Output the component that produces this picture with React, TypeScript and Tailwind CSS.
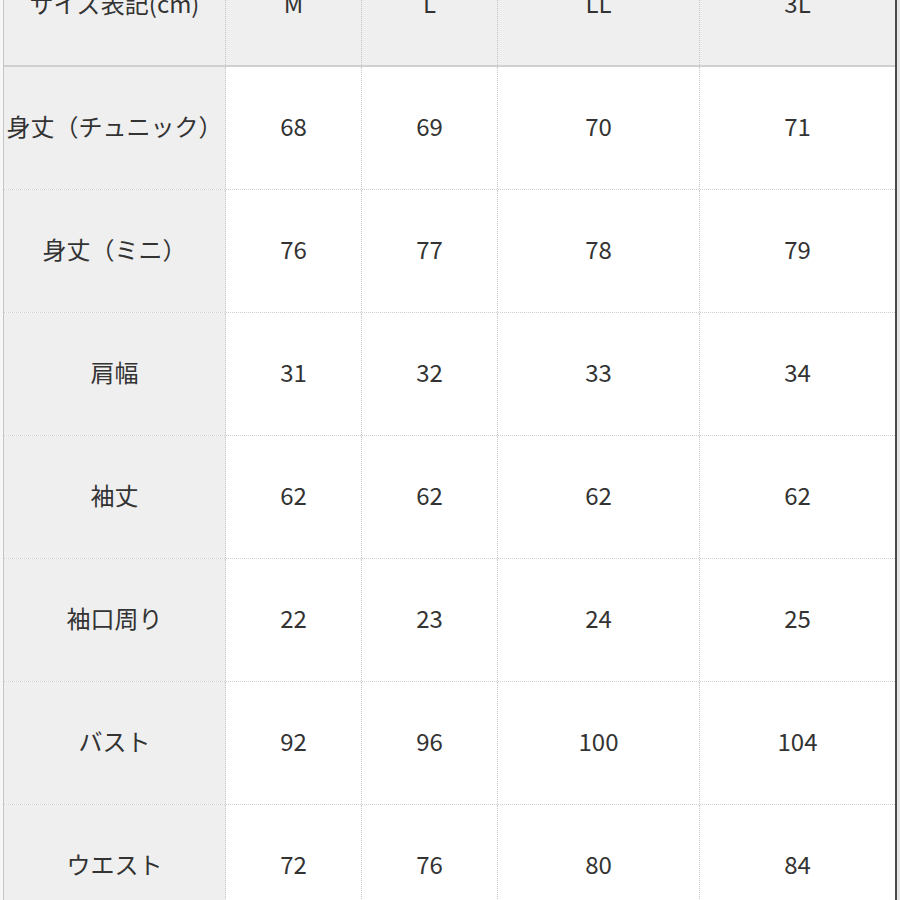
import React from "react";

const header = ["サイズ表記(cm)", "M", "L", "LL", "3L"];
const rows: string[][] = [
  ["身丈（チュニック）", "68", "69", "70", "71"],
  ["身丈（ミニ）", "76", "77", "78", "79"],
  ["肩幅", "31", "32", "33", "34"],
  ["袖丈", "62", "62", "62", "62"],
  ["袖口周り", "22", "23", "24", "25"],
  ["バスト", "92", "96", "100", "104"],
  ["ウエスト", "72", "76", "80", "84"],
];

export default function App() {
  return (
    <div
      className="w-[900px] h-[900px] overflow-hidden bg-white text-[#333] text-[24px] flex"
      style={{ fontFamily: '"Noto Sans CJK JP", "Noto Sans", sans-serif' }}
    >
      <div className="w-[3px] shrink-0 bg-[#f7f7f7]" />
      <div className="w-[1px] shrink-0 bg-[#c4c4c4]" />
      <div className="w-[891px] shrink-0 -mt-[56px]">
        <div className="grid grid-cols-[222px_136px_136px_202px_195px] bg-[#efefef] border-b-2 border-solid border-[#d0d0d0]">
          {header.map((h, i) => (
            <div
              key={i}
              className={`h-[121px] pb-[4px] flex items-center justify-center ${i < 4 ? "border-r border-dotted border-[#c8c8c8]" : ""}`}
            >
              {h}
            </div>
          ))}
        </div>
        {rows.map((r, ri) => (
          <div
            key={ri}
            className="grid grid-cols-[222px_136px_136px_202px_195px] border-b border-dotted border-[#cfcfcf]"
          >
            {r.map((c, ci) => (
              <div
                key={ci}
                className={`h-[122px] pb-[4px] flex items-center justify-center ${ci === 0 ? "bg-[#efefef]" : "bg-white"} ${ci < 4 ? "border-r border-dotted border-[#c8c8c8]" : ""}`}
              >
                {c}
              </div>
            ))}
          </div>
        ))}
      </div>
      <div className="w-[2px] shrink-0 bg-[#4a4a4a]" />
      <div className="w-[3px] shrink-0 bg-[#e6e6e6]" />
    </div>
  );
}
